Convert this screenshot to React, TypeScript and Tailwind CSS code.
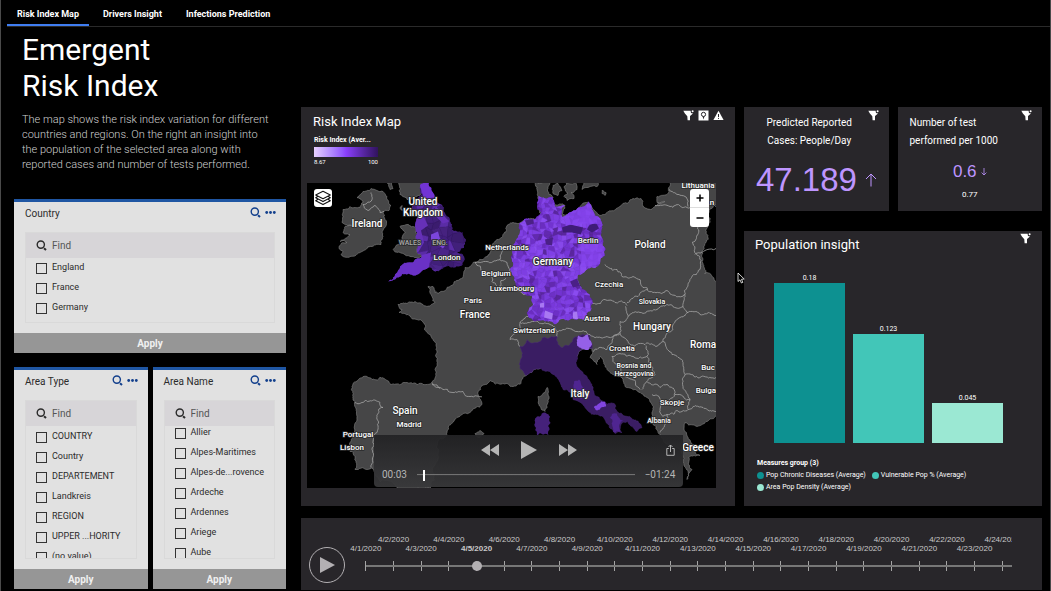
import { useState } from "react";
import clsx from "clsx";

type Point = [number, number];

const tabs = ["Risk Index Map", "Drivers Insight", "Infections Prediction"];

const countries = ["England", "France", "Germany"];

const areaTypes = [
  "COUNTRY",
  "Country",
  "DEPARTEMENT",
  "Landkreis",
  "REGION",
  "UPPER ...HORITY",
  "(no value)",
];

const areaNames = [
  "Allier",
  "Alpes-Maritimes",
  "Alpes-de...rovence",
  "Ardeche",
  "Ardennes",
  "Ariege",
  "Aube",
];

const measures = [
  { label: "Pop Chronic Diseases (Average)", value: 0.18, color: "bg-[#0d9191]" },
  { label: "Vulnerable Pop % (Average)", value: 0.123, color: "bg-[#42c6b8]" },
  { label: "Area Pop Density (Average)", value: 0.045, color: "bg-[#9be8d3]" },
];

const days = Array.from({ length: 24 }, (_, i) => `4/${i + 1}/2020`);

/* ---------- map geometry ---------- */

const parse = (line: string): Point[] =>
  line.split(" ").map((p) => p.split(",").map(Number) as Point);

const noise = (x: number, y: number) => {
  const s = Math.sin(x * 12.9898 + y * 78.233) * 43758.5453;
  return s - Math.floor(s) - 0.5;
};

// splits a segment and nudges the middle, so coasts and borders look natural
const split = (a: Point, b: Point): Point[] => {
  const len = Math.hypot(b[0] - a[0], b[1] - a[1]);
  if (len < 2) return [b];
  const mx = (a[0] + b[0]) / 2;
  const my = (a[1] + b[1]) / 2;
  const mid: Point = [
    mx + noise(mx, my) * len * 0.4,
    my + noise(my, mx) * len * 0.4,
  ];
  return [...split(a, mid), ...split(mid, b)];
};

const trace = (line: string, closed = false) => {
  const pts = parse(line);
  if (closed) pts.push(pts[0]);
  const out: Point[] = [pts[0]];
  for (let i = 1; i < pts.length; i++) out.push(...split(pts[i - 1], pts[i]));
  return (
    "M" +
    out.map(([x, y]) => `${x.toFixed(1)} ${y.toFixed(1)}`).join("L") +
    (closed ? "Z" : "")
  );
};

const land = [
  // continent
  "670,183 669,192 657,197 657,203 665,202 655,207 647,209 643,207 641,199 633,199 622,205 607,213 600,216 592,208 589,203 580,207 570,215 563,215 565,206 553,207 553,198 549,195 548,188 550,183 535,183 537,190 538,197 540,207 541,215 535,220 523,221 519,224 513,223 507,226 503,235 497,240 490,253 483,260 473,263 465,268 463,278 450,287 443,292 435,293 433,287 428,287 432,297 435,303 423,305 415,302 407,304 398,305 402,310 399,313 408,315 417,320 425,325 427,333 433,340 436,350 435,370 432,383 423,385 407,383 387,381 372,380 367,377 352,387 355,402 357,417 353,437 350,452 355,457 355,470 367,470 372,468 380,482 400,489 430,489 438,460 447,433 457,418 470,413 482,405 481,387 490,381 503,384 513,387 523,378 530,373 540,369 577,357 582,350 592,349 590,358 597,365 600,357 610,373 625,387 640,393 652,405 652,423 658,433 668,446 683,457 687,480 692,470 689,458 700,456 694,446 687,436 685,423 697,427 706,422 720,417 720,180",
  // Ireland
  "363,192 371,189 377,191 383,192 387,197 391,206 389,211 383,213 385,220 385,228 383,237 381,245 372,247 362,252 350,257 341,255 343,252 339,248 347,243 340,242 348,237 350,235 343,233 345,227 352,226 342,223 343,217 343,210 350,207 360,208 363,203 357,198",
  // Scotland
  "395,180 400,195 407,200 415,197 423,190 426,180",
  "387,183 392,183 393,189 390,190",
  // Wales
  "400,227 408,225 417,227 415,243 417,252 422,257 410,257 400,253 393,250 395,248 403,245 405,233",
  // Danish islands, Sweden, Bornholm
  "553,186 558,184 562,191 558,196 553,194",
  "566,183 576,182 577,190 571,193 574,199 567,201 564,197 568,194 564,188",
  "583,182 598,182 597,187 588,188 582,190",
  "602,191 606,193 605,196 602,194",
  // Corsica and Balearics
  "547,388 548,403 545,412 539,406 538,397 545,393",
  "475,434 480,431 484,434 480,438",
  "400,209 402,206 402,211",
];

const england =
  "424,183 429,183 433,193 437,202 444,208 447,217 452,225 452,230 457,232 463,233 466,240 464,248 457,253 463,255 463,263 455,268 443,269 435,272 430,268 425,270 418,275 413,276 407,275 400,277 395,280 388,282 395,275 400,267 408,263 415,260 422,257 417,252 415,243 417,233 415,227 418,217 412,210 417,200 422,195 420,187";

const germany =
  "538,197 553,198 555,207 565,206 562,217 575,211 588,202 592,210 598,217 601,235 605,256 600,264 588,269 578,275 577,280 583,290 593,303 590,312 585,320 577,320 570,320 555,325 545,322 533,321 528,317 531,296 520,290 512,275 512,262 513,245 518,238 519,225 535,220 541,213";

const italy =
  "520,347 527,340 535,343 543,338 557,337 558,345 563,348 570,345 578,337 590,336 592,349 582,350 577,357 578,368 590,382 600,400 607,405 615,405 617,412 633,420 642,428 637,432 628,422 621,425 622,433 615,434 608,425 603,417 597,415 585,408 573,400 563,390 557,378 550,372 540,369 530,373 526,376 520,367 522,356";

const sardinia = "537,417 545,413 550,417 549,436 537,436 535,422";
const friuli = "578,336 588,335 592,345 589,350 579,348";

const borders = [
  "371,193 372,200 363,205 368,211 375,206 380,213 384,212",
  "605,265 617,270 622,277 633,277 643,288 653,293 667,291 685,295",
  "698,227 698,235 692,243 697,255 700,270 688,285 685,297 683,307",
  "695,255 705,251 716,249",
  "655,206 670,207 687,208 700,209 716,207",
  "669,190 678,195 685,197 688,207",
  "578,275 583,271 600,264",
  "592,304 605,300 615,303 625,303 627,306",
  "625,307 628,317 640,313 657,310 667,305 683,307",
  "627,303 638,297 647,290",
  "628,317 620,322 620,333 628,342 645,345 663,342 673,330 680,318 688,313 683,307",
  "688,313 700,315 716,316",
  "510,340 517,332 520,323 533,322 550,325 557,332 563,330 577,332 590,335 607,337 620,332",
  "510,340 517,340 520,347",
  "557,332 557,337",
  "593,352 607,350 612,343 620,334",
  "613,362 612,357 633,357 647,357 646,346",
  "613,362 625,377 640,390",
  "647,357 652,367 655,375 647,382 642,390",
  "663,342 672,355 683,363 685,375 700,378 716,378",
  "685,375 683,387 690,400 688,410 703,408 716,412",
  "647,382 660,388 667,385 675,393 673,398 663,403 659,397 652,395",
  "675,395 690,400",
  "662,403 660,410 663,417 667,415 677,411 688,410",
  "667,415 665,425 660,433",
  "475,263 487,262 500,260 507,263 510,273",
  "475,263 482,273 492,277 492,282 497,287 510,289 520,292 531,296",
  "500,287 501,281 506,279",
  "500,260 503,250 507,247 513,246",
  "528,317 520,323",
  "432,383 443,390 457,393 463,392 470,397 482,397",
  "355,403 363,403 380,403 383,408 377,417 377,433 372,450 371,468",
  "432,385 440,389",
];

const mosaic = (
  [x0, y0, x1, y1]: number[],
  size: number,
  palette: string[],
) => {
  const at = (i: number, j: number) => {
    const x = x0 + i * size;
    const y = y0 + j * size;
    return `${(x + noise(x, y) * size).toFixed(1)},${(y + noise(y, x + 3) * size).toFixed(1)}`;
  };
  const cells: { points: string; fill: string }[] = [];
  for (let i = 0; x0 + i * size < x1; i++) {
    for (let j = 0; y0 + j * size < y1; j++) {
      const n = noise(i * 3.7 + size, j * 5.1 + x0) + 0.5;
      cells.push({
        points: [at(i, j), at(i + 1, j), at(i + 1, j + 1), at(i, j + 1)].join(" "),
        fill: palette[Math.floor(n * palette.length)],
      });
    }
  }
  return cells;
};

const germanCells = mosaic([506, 192, 610, 330], 4, [
  "#7f3fe3", "#7838db", "#8544ea", "#7a3bdd", "#7233d0", "#8a4bf0", "#7c3ce0",
  "#6d30c6", "#8040e6", "#7636d8", "#6229b0", "#8948ee", "#6a2dc0", "#7e3ee2",
  "#8748ea", "#5a269f",
]);

const englishCells = mosaic([384, 180, 470, 286], 7, [
  "#41207a", "#3d1d73", "#4a2589", "#421f7c", "#5a2ca5", "#46227f", "#3b1c6e",
]);

const mapLabels = [
  { text: "Ireland", x: 367, y: 227, size: 10 },
  { text: "United", x: 423, y: 205, size: 10 },
  { text: "Kingdom", x: 423, y: 216, size: 10 },
  { text: "London", x: 447, y: 260, size: 8 },
  { text: "Netherlands", x: 507, y: 250, size: 8 },
  { text: "Belgium", x: 496, y: 276, size: 8 },
  { text: "Luxembourg", x: 512, y: 291, size: 8 },
  { text: "Germany", x: 553, y: 265, size: 10 },
  { text: "Berlin", x: 588, y: 243, size: 8 },
  { text: "Poland", x: 650, y: 248, size: 10 },
  { text: "Lithuania", x: 698, y: 188, size: 8 },
  { text: "n", x: 712, y: 205, size: 8 },
  { text: "Czechia", x: 609, y: 287, size: 8 },
  { text: "Slovakia", x: 652, y: 304, size: 7 },
  { text: "Austria", x: 597, y: 321, size: 8 },
  { text: "Hungary", x: 652, y: 330, size: 10 },
  { text: "Switzerland", x: 534, y: 333, size: 8 },
  { text: "Croatia", x: 622, y: 351, size: 8 },
  { text: "Bosnia and", x: 634, y: 368, size: 7 },
  { text: "Herzegovina", x: 634, y: 376, size: 7 },
  { text: "Paris", x: 473, y: 303, size: 8 },
  { text: "France", x: 475, y: 318, size: 10 },
  { text: "Spain", x: 405, y: 414, size: 10 },
  { text: "Madrid", x: 409, y: 427, size: 8 },
  { text: "Portugal", x: 358, y: 437, size: 8 },
  { text: "Lisbon", x: 352, y: 450, size: 8 },
  { text: "Italy", x: 580, y: 397, size: 10 },
  { text: "Roma", x: 703, y: 348, size: 10 },
  { text: "Buc", x: 708, y: 370, size: 8 },
  { text: "Bulga", x: 706, y: 393, size: 8 },
  { text: "Skopje", x: 672, y: 405, size: 8 },
  { text: "Albania", x: 659, y: 423, size: 7 },
  { text: "Greece", x: 698, y: 451, size: 10 },
];

/* ---------- icons ---------- */

const FilterIcon = () => (
  <svg viewBox="0 0 11 11" className="size-[11px] fill-white">
    <path d="M.3.8H7.6L8 2.9 10 3.4 7 6V10.3H4.6L4.3 6.2 1.9 3.6Z" />
    <circle cx="9.6" cy="1.3" r="1" />
  </svg>
);

const SearchIcon = () => (
  <svg viewBox="0 0 11 11" fill="none" stroke="currentColor" className="size-[11px] shrink-0">
    <circle cx="4.8" cy="4.6" r="3.6" strokeWidth="1.4" />
    <path d="M8 8.2 10 10" strokeWidth="2" />
  </svg>
);

const DotsIcon = () => (
  <svg viewBox="0 0 11 11" fill="currentColor" className="size-[11px] shrink-0">
    <circle cx="1.7" cy="5.5" r="1.4" />
    <circle cx="5.5" cy="5.5" r="1.4" />
    <circle cx="9.3" cy="5.5" r="1.4" />
  </svg>
);

const LayersIcon = () => (
  <svg viewBox="0 0 18 18" fill="none" stroke="#111" strokeWidth="1.1" strokeLinejoin="round" className="size-[18px]">
    <path d="M9 2.3 16.3 6 9 9.7 1.7 6Z" />
    <path d="M4 7.3 1.7 8.8 9 12.6 16.3 8.8 14 7.3" />
    <path d="M4 10.2 1.7 11.7 9 15.6 16.3 11.7 14 10.2" />
  </svg>
);

const PinIcon = () => (
  <svg viewBox="0 0 11 11" className="size-[11px]">
    <path d="M.5.5H10.5V10.5H.5Z" fill="#fff" />
    <circle cx="5.5" cy="4.4" r="2.1" fill="none" stroke="#28262a" />
    <path d="M4.6 6.6H6.4L5.5 9.4Z" fill="#28262a" />
  </svg>
);

const WarningIcon = () => (
  <svg viewBox="0 0 11 11" className="size-[11px]">
    <path d="M5.5.8 10.6 10H.4Z" fill="#fff" />
    <path d="M5.5 4V7M5.5 7.9V8.9" stroke="#28262a" />
  </svg>
);

/* ---------- filters ---------- */

const FilterPanel = ({
  title,
  items,
  className,
  listClass,
}: {
  title: string;
  items: string[];
  className?: string;
  listClass?: string;
}) => {
  return (
    <section
      className={clsx("flex min-h-0 min-w-0 flex-col border-t-[3px] border-[#1f56a3] bg-[#e1e1e1] text-[#2b2b2b]", className)}
    >
      <header className="flex h-[30px] shrink-0 items-start justify-between pt-1 pr-[10px] pl-[11px]">
        <h2 className="text-[10px] leading-4">{title}</h2>
        <div className="flex gap-1 pt-px text-[#123f8c]">
          <button aria-label={`Search ${title}`}>
            <SearchIcon />
          </button>
          <button aria-label={`${title} options`}>
            <DotsIcon />
          </button>
        </div>
      </header>
      <div className="mx-[11px] flex min-h-0 flex-1 flex-col border border-[#d9d9d9]">
        <label className="flex h-[25px] shrink-0 items-center gap-[5px] bg-[#d7d5d8] pl-[10px]">
          <SearchIcon />
          <input
            type="text"
            placeholder="Find"
            aria-label={`Find ${title}`}
            className="w-full min-w-0 bg-transparent text-[10px] outline-none placeholder:text-[#555]"
          />
        </label>
        <ul className={clsx("min-h-0 flex-1 overflow-hidden", listClass)}>
          {items.map((el) => (
            <li key={el}>
              <label className="flex h-5 items-center gap-[5px] pl-[10px] text-[9px] whitespace-nowrap">
                <input
                  type="checkbox"
                  className="size-[11px] shrink-0 appearance-none border border-[#333] checked:bg-[#123f8c]"
                />
                {el}
              </label>
            </li>
          ))}
        </ul>
      </div>
      <button className="mt-[10px] h-5 shrink-0 bg-[#969696] text-[10px] font-bold text-[#f0f0f0]">
        Apply
      </button>
    </section>
  );
};

/* ---------- map ---------- */

const EuropeMap = () => {
  return (
    <svg
      viewBox="307 183 409 306"
      preserveAspectRatio="xMidYMid slice"
      className="block h-full w-full bg-black"
    >
      <defs>
        <clipPath id="germany">
          <path d={trace(germany, true)} />
        </clipPath>
        <clipPath id="england">
          <path d={trace(england, true)} />
        </clipPath>
      </defs>
      {land.map((el) => (
        <path key={el} d={trace(el, true)} fill="#464647" stroke="#858585" strokeWidth="0.6" />
      ))}
      {borders.map((el) => (
        <path key={el} d={trace(el)} fill="none" stroke="#a5a5a5" strokeWidth="0.8" />
      ))}
      <g clipPath="url(#germany)">
        {germanCells.map((c) => (
          <polygon key={c.points} points={c.points} fill={c.fill} stroke={c.fill} strokeWidth="0.5" />
        ))}
        <path d="M562 228 570 225 583 228 581 235 572 233 563 233ZM589 226 596 223 599 229 592 233 587 230Z" fill="#3f1c78" />
        <path d="M545 240 553 238 552 246 546 245ZM570 282 577 279 580 286 573 288ZM525 221 533 219 534 224 527 226Z" fill="#4b2087" />
        <path d="M565 205 598 205 603 225 585 224 566 226ZM580 240 605 245 604 264 582 268Z" fill="#8746f0" opacity="0.7" />
        <path d="M540 304 544 303 544 308 540 308ZM573 313 577 312 578 320 573 319ZM545 311 553 314 552 320 544 318Z" fill="#a878f2" />
      </g>
      <g clipPath="url(#england)">
        {englishCells.map((c) => (
          <polygon key={c.points} points={c.points} fill={c.fill} stroke={c.fill} strokeWidth="0.5" />
        ))}
        <path d="M418 180H432L436 198 424 199Z" fill="#7234d4" />
        <path d="M385 285 396 264 420 256 431 253 429 268 414 278Z" fill="#6a31c6" />
        <path d="M410 215 424 218 428 226 421 231 424 243 418 253 410 250ZM436 207 449 222 443 224 433 214Z" fill="#6630b8" />
        <path d="M431 235 438 232 440 239 447 243 443 249 436 244 431 240Z" fill="#7c45dc" />
      </g>
      <path d={trace(italy, true)} fill="#3a1d63" stroke="#4a2b78" strokeWidth="0.5" />
      <path d={trace(sardinia, true)} fill="#45217a" />
      <path d={trace(friuli, true)} fill="#9560e8" />
      <path d={trace("594,408 599,404 605,402 606,407 600,410 597,411", true)} fill="#8245e0" />
      <path d={trace("574,382 579,380 583,388 589,397 581,400 573,391", true)} fill="#4f2591" />
      <path d={trace("610,418 617,414 623,421 619,427 621,433 614,433", true)} fill="#4f2591" />
      <g fontFamily="Roboto, sans-serif" fontWeight="500" textAnchor="middle" fill="#fff" stroke="#2c2c2c" strokeWidth="1.6" paintOrder="stroke">
        {mapLabels.map((el) => (
          <text key={el.text} x={el.x} y={el.y} fontSize={el.size}>
            {el.text}
          </text>
        ))}
        <g fill="#a9a9a9" fontSize="7">
          <text x="410" y="245">WALES</text>
          <text x="440" y="245">ENG.</text>
        </g>
      </g>
    </svg>
  );
};

const Player = () => {
  return (
    <div className="absolute inset-x-[8%] bottom-px left-[67px] flex h-[52px] flex-col justify-between rounded-b-sm bg-linear-to-b from-[#232325]/95 to-[#38383a]/95 px-2 pt-[6px] pb-1 text-[#b5b5b5]">
      <div className="flex items-center pl-[9px]">
        <div className="flex flex-1 items-center justify-center gap-[21px]">
          <button aria-label="Rewind">
            <svg viewBox="0 0 18 12" className="h-3 w-[18px] fill-current">
              <path d="M9 0V12L0 6ZM18 0V12L9 6Z" />
            </svg>
          </button>
          <button aria-label="Play video">
            <svg viewBox="0 0 18 18" className="size-[18px] fill-current">
              <path d="M1 0 17 9 1 18Z" />
            </svg>
          </button>
          <button aria-label="Fast forward">
            <svg viewBox="0 0 18 12" className="h-3 w-[18px] fill-current">
              <path d="M0 0 9 6 0 12ZM9 0 18 6 9 12Z" />
            </svg>
          </button>
        </div>
        <button aria-label="Share">
          <svg viewBox="0 0 9 12" fill="none" stroke="currentColor" className="h-3 w-[9px]">
            <path d="M2.8 4.5H.8V11.3H8.2V4.5H6.2M4.5 8V1M2.5 3 4.5 1 6.5 3" />
          </svg>
        </button>
      </div>
      <div className="flex items-center gap-[10px] text-[10px] leading-4">
        <span>00:03</span>
        <input
          type="range"
          aria-label="Position"
          defaultValue={3}
          className="h-3 min-w-0 flex-1 appearance-none bg-linear-to-b from-transparent from-45% via-[#777] via-45% to-transparent to-55% [&::-webkit-slider-thumb]:h-[11px] [&::-webkit-slider-thumb]:w-[2px] [&::-webkit-slider-thumb]:appearance-none [&::-webkit-slider-thumb]:bg-white"
        />
        <span>−01:24</span>
      </div>
    </div>
  );
};

const MapPanel = () => {
  return (
    <section className="flex min-w-0 flex-col bg-[#28262a] pr-[19px] pb-[18px] pl-[6px]">
      <header className="flex h-[76px] items-start justify-between pl-[6px]">
        <div className="pt-[7px]">
          <h2 className="text-[13px] leading-4">Risk Index Map</h2>
          <p className="mt-[6px] pl-px text-[7px] leading-2 font-bold">Risk Index (Aver...</p>
          <div className="mt-[3px] ml-px h-[10px] w-16 bg-linear-to-r from-[#e8d0ff] via-[#8a3ffc] to-[#31135e]" />
          <div className="ml-px flex w-16 justify-between text-[6px] leading-[10px]">
            <span>8.67</span>
            <span>100</span>
          </div>
        </div>
        <div className="-mr-2 flex gap-1 pt-[3px]">
          <button aria-label="Filters">
            <FilterIcon />
          </button>
          <button aria-label="Locations">
            <PinIcon />
          </button>
          <button aria-label="Warnings">
            <WarningIcon />
          </button>
        </div>
      </header>
      <div className="relative h-[305px] overflow-hidden">
        <EuropeMap />
        <button aria-label="Layers" className="absolute top-[6px] left-[7px] rounded-[3px] bg-white">
          <LayersIcon />
        </button>
        <div className="absolute top-[6px] right-[7px] flex w-[19px] flex-col divide-y divide-[#ddd] rounded-[3px] bg-white text-black">
          <button aria-label="Zoom in" className="grid h-[19px] place-items-center">
            <svg viewBox="0 0 8 8" stroke="#000" strokeWidth="1.5" className="size-2">
              <path d="M.5 4H7.5M4 .5V7.5" />
            </svg>
          </button>
          <button aria-label="Zoom out" className="grid h-[19px] place-items-center">
            <svg viewBox="0 0 8 8" stroke="#000" strokeWidth="1.5" className="size-2">
              <path d="M.5 4H7.5" />
            </svg>
          </button>
        </div>
        <Player />
      </div>
    </section>
  );
};

/* ---------- figures ---------- */

const Kpis = () => {
  return (
    <div className="grid h-[104px] grid-cols-2 gap-[9px]">
      <section className="relative bg-[#28262a] pt-[7px]">
        <h2 className="pr-[14px] text-center text-[10px] leading-[18px]">
          Predicted Reported
          <br />
          Cases: People/Day
        </h2>
        <p className="flex items-center gap-2 pt-3 pl-3 font-['Liberation_Sans',sans-serif] text-[33px] leading-9 text-[#be95ff]">
          47.189
          <svg viewBox="0 0 12 14" fill="none" stroke="currentColor" className="h-[14px] w-3">
            <path d="M6 13.5V1M1 6 6 1 11 6" />
          </svg>
        </p>
        <button aria-label="Filters" className="absolute top-[3px] right-[10px]">
          <FilterIcon />
        </button>
      </section>
      <section className="relative bg-[#28262a] pt-[7px]">
        <h2 className="pl-3 text-[10px] leading-[18px]">
          Number of test
          <br />
          performed per 1000
        </h2>
        <p className="flex items-center justify-center gap-1 pt-3 font-['Liberation_Sans',sans-serif] text-[17px] leading-5 text-[#be95ff]">
          0.6
          <svg viewBox="0 0 6 8" fill="none" stroke="currentColor" strokeWidth="0.8" className="h-2 w-[6px]">
            <path d="M3 0V7M.6 4.6 3 7 5.4 4.6" />
          </svg>
        </p>
        <p className="pt-[5px] text-center text-[8px] leading-4">0.77</p>
        <button aria-label="Filters" className="absolute top-[3px] right-[10px]">
          <FilterIcon />
        </button>
      </section>
    </div>
  );
};

const PopulationInsight = () => {
  return (
    <section className="relative flex flex-1 flex-col bg-[#28262a]">
      <h2 className="pt-[6px] pl-[11px] text-[13px] leading-4">Population insight</h2>
      <button aria-label="Filters" className="absolute top-[2px] right-[11px]">
        <FilterIcon />
      </button>
      <div className="mt-5 mr-[39px] ml-[30px] grid h-[170px] grid-cols-3 items-end gap-2">
        {measures.map((el) => (
          <div key={el.label} className="text-center text-[7px] leading-[10px]">
            {el.value}
            <div className={el.color} style={{ height: Math.round((el.value / 0.18) * 160) }} />
          </div>
        ))}
      </div>
      <div className="pt-[14px] pl-[13px] text-[7px]">
        <h3 className="leading-3 font-bold">Measures group (3)</h3>
        <ul className="flex flex-wrap gap-x-[6px] pr-16 leading-3">
          {measures.map((el) => (
            <li key={el.label} className="flex items-center gap-[2px] whitespace-nowrap">
              <span className={clsx("size-[7px] rounded-full", el.color)} />
              {el.label}
            </li>
          ))}
        </ul>
      </div>
    </section>
  );
};

const Timeline = () => {
  const [day, setDay] = useState<number>(4);

  return (
    <section className="flex h-[72px] bg-[#28262a] pr-[30px] pl-2 font-['Liberation_Sans',sans-serif] text-[#c9c9c9]">
      <button
        aria-label="Play timeline"
        className="mt-[29px] grid size-9 shrink-0 place-items-center rounded-full border border-[#b3b0b3]"
      >
        <svg viewBox="0 0 16 16" className="size-4 fill-[#b3b0b3]">
          <path d="M1 0 16 8 1 16Z" />
        </svg>
      </button>
      <div className="min-w-0 flex-1 overflow-hidden pt-[17px] pl-[7px]">
        <div className="relative -mr-1">
          <ol className="flex">
            {days.map((el, i) => (
              <li
                key={el}
                className={clsx(
                  "flex h-[36px] min-w-0 flex-1 flex-col items-center text-[8px] leading-[9px] whitespace-nowrap",
                  i % 2 === 0 && "pt-[9px]",
                  i === day && "font-bold",
                )}
              >
                <span>{el}</span>
                <span className="mt-auto h-[10px] w-px shrink-0 bg-[#a5a5a5]" />
              </li>
            ))}
          </ol>
          <div className="absolute right-0 bottom-1 left-[14px] h-[2px] bg-[#777]" />
          <input
            type="range"
            aria-label="Day"
            min={0}
            max={23}
            value={day}
            onChange={(e) => setDay(Number(e.target.value))}
            className="absolute inset-x-[9px] bottom-0 h-[10px] w-[calc(100%-18px)] appearance-none bg-transparent [&::-webkit-slider-thumb]:size-[10px] [&::-webkit-slider-thumb]:appearance-none [&::-webkit-slider-thumb]:rounded-full [&::-webkit-slider-thumb]:bg-[#b3b0b3]"
          />
        </div>
      </div>
    </section>
  );
};

export default function App() {
  const [activeTab, setActiveTab] = useState<number>(0);

  return (
    <div className="relative min-h-screen border-x border-[#4a4a4a] bg-black font-[Roboto,sans-serif] text-white">
      <nav className="ml-[6px] flex h-[27px] gap-1 border-b border-[#2a2a2a]">
        {tabs.map((el, i) => (
          <button
            key={el}
            onClick={() => setActiveTab(i)}
            className={clsx(
              "h-[26px] border-b-2 px-[10px] pt-[6px] text-[9px] font-bold",
              i === activeTab ? "border-[#3f7df0]" : "border-transparent",
            )}
          >
            {el}
          </button>
        ))}
      </nav>
      <main className="grid grid-cols-[minmax(0,272fr)_minmax(0,741fr)] gap-[15px] pr-2 pl-[13px]">
        <div className="flex flex-col">
          <div className="pt-[5px] pl-2">
            <h1 className="text-[30px] leading-9">
              Emergent
              <br />
              Risk Index
            </h1>
            <p className="mt-2 text-[11px] leading-[15px] font-light text-[#d0d0d0]">
              The map shows the risk index variation for different
              <br />
              countries and regions. On the right an insight into
              <br />
              the population of the selected area along with
              <br />
              reported cases and number of tests performed.
            </p>
          </div>
          <FilterPanel title="Country" items={countries} className="mt-[27px] h-[154px]" />
          <div className="mt-[14px] grid h-[222px] grid-cols-2 grid-rows-1 gap-[5px]">
            <FilterPanel title="Area Type" items={areaTypes} listClass="pt-px" />
            <FilterPanel title="Area Name" items={areaNames} listClass="[&>li:first-child]:-mt-[3px]" />
          </div>
        </div>
        <div className="flex flex-col gap-3 pt-20">
          <div className="grid grid-cols-[minmax(0,434fr)_minmax(0,298fr)] gap-[9px]">
            <MapPanel />
            <div className="flex flex-col gap-5">
              <Kpis />
              <PopulationInsight />
            </div>
          </div>
          <Timeline />
        </div>
      </main>
      <svg viewBox="0 0 8 12" className="absolute top-[272px] left-[736px] h-3 w-2 fill-black stroke-white">
        <path d="M1 1V9.5L3 7.8 4.4 11 5.8 10.4 4.5 7.3 7.2 7Z" strokeWidth="0.8" />
      </svg>
    </div>
  );
}
